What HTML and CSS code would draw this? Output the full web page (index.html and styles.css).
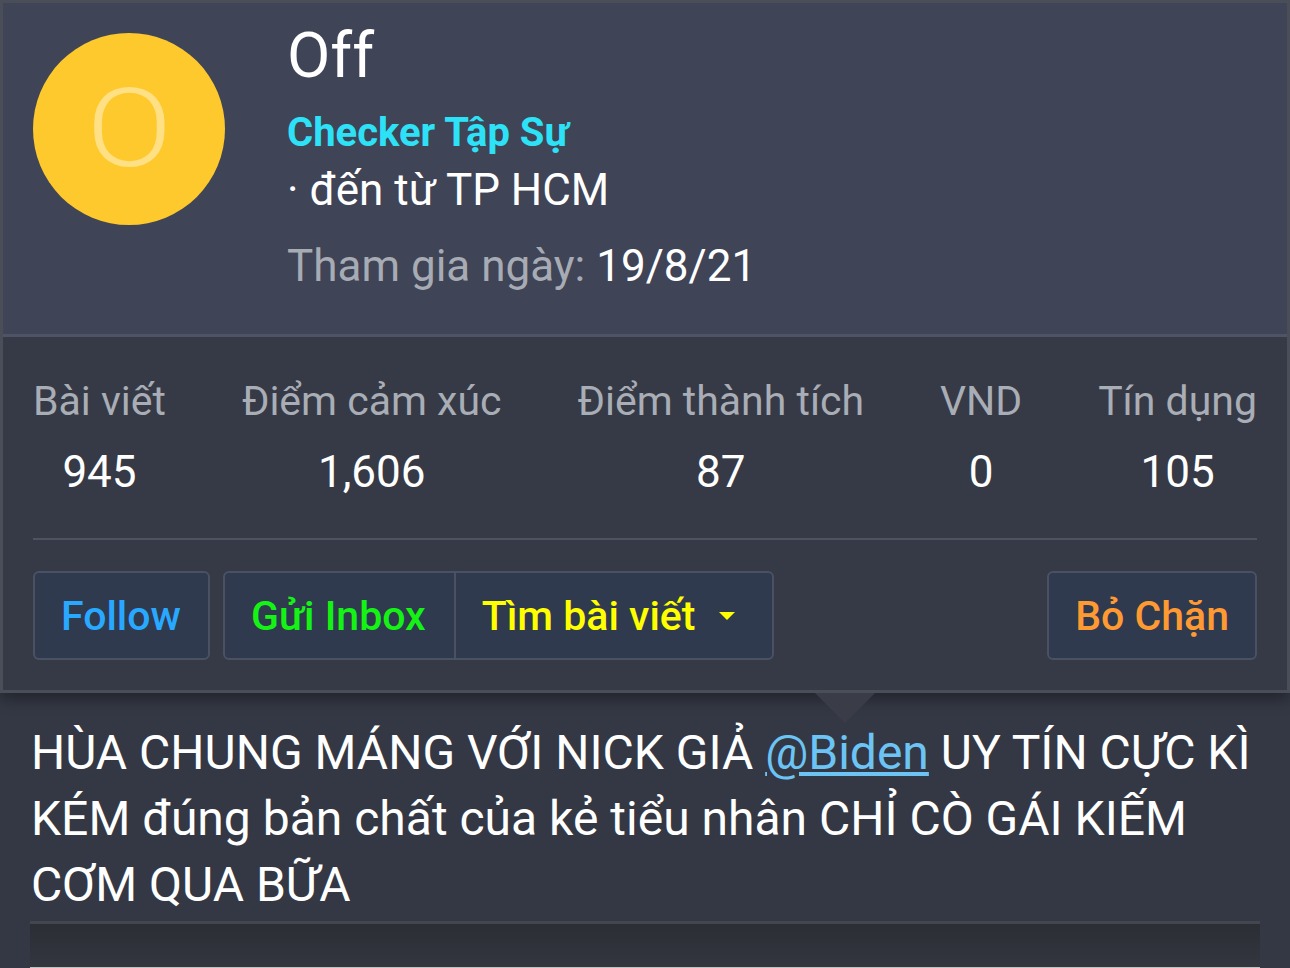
FILE: index.html
```html
<!DOCTYPE html>
<html lang="vi">
<head>
    <meta charset="UTF-8">
    <meta name="viewport" content="width=device-width, initial-scale=1.0">
    <title>Off - hồ sơ</title>
    <link rel="stylesheet" href="styles.css">
</head>
<body>
    <div class="member-card">
        <div class="card-head">
            <div class="avatar"><span>O</span></div>
            <div class="member-info">
                <h2 class="username">Off</h2>
                <div class="user-title">Checker Tập Sự</div>
                <div class="user-from">· đến từ TP HCM</div>
                <div class="user-joined"><span class="muted">Tham gia ngày:</span> 19/8/21</div>
            </div>
        </div>

        <div class="card-body">
            <div class="stats">
                <div class="stat"><div class="stat-label">Bài viết</div><div class="stat-value">945</div></div>
                <div class="stat"><div class="stat-label">Điểm cảm xúc</div><div class="stat-value">1,606</div></div>
                <div class="stat"><div class="stat-label">Điểm thành tích</div><div class="stat-value">87</div></div>
                <div class="stat"><div class="stat-label">VND</div><div class="stat-value">0</div></div>
                <div class="stat"><div class="stat-label">Tín dụng</div><div class="stat-value">105</div></div>
            </div>

            <div class="actions">
                <a class="button btn-follow" href="#">Follow</a>
                <div class="button-group">
                    <a class="button btn-inbox" href="#">Gửi Inbox</a>
                    <a class="button btn-find" href="#">Tìm bài viết <span class="caret"></span></a>
                </div>
                <a class="button btn-unblock" href="#">Bỏ Chặn</a>
            </div>
        </div>
        <span class="card-arrow"></span>
    </div>

    <div class="post-text">
        HÙA CHUNG MÁNG VỚI NICK GIẢ <a class="mention" href="#">@Biden</a> UY TÍN CỰC KÌ KÉM đúng bản chất của kẻ tiểu nhân CHỈ CÒ GÁI KIẾM CƠM QUA BỮA
    </div>

    <div class="post-footer"></div>
</body>
</html>
```

FILE: styles.css
```css
body {
    margin: 0;
    background-color: #343844;
    font-family: Roboto, "Noto Sans", sans-serif;
    color: #ffffff;
    overflow: hidden;
}

.member-card {
    position: relative;
    z-index: 2;
    border: 3px solid #4a4e59;
    background-color: #363a46;
    box-shadow: 0 6px 14px rgba(0, 0, 0, 0.35);
}

.card-head {
    display: flex;
    gap: 62px;
    height: 334px;
    padding: 30px 30px 0;
    box-sizing: border-box;
    background-color: #3f4457;
    border-bottom: 3px solid #4e5466;
}

.avatar {
    width: 192px;
    height: 192px;
    border-radius: 50%;
    background-color: #fec92c;
    display: flex;
    align-items: center;
    justify-content: center;
    flex-shrink: 0;
}

.avatar span {
    color: #ffe084;
    font-size: 110px;
    font-weight: 300;
    line-height: 1;
    transform: scaleX(1.15);
}

.member-info {
    display: flex;
    flex-direction: column;
}

.username {
    margin: 0;
    font-size: 63px;
    font-weight: 400;
    line-height: 52px;
    margin-top: -3px;
}

.user-title {
    margin-top: 27px;
    color: #2de2f6;
    font-weight: 700;
    font-size: 40px;
    line-height: 48px;
}

.user-from {
    margin-top: 9px;
    font-size: 44px;
    line-height: 48px;
}

.user-joined {
    margin-top: 27px;
    font-size: 44px;
    line-height: 50px;
}

.muted {
    color: #a7abb3;
}

.card-body {
    padding: 39px 30px 30px;
}

.stats {
    display: flex;
    justify-content: space-between;
    padding-bottom: 41px;
    border-bottom: 2px solid #4e5363;
}

.stat {
    text-align: center;
}

.stat-label {
    color: #a9adb5;
    font-size: 41px;
    line-height: 50px;
}

.stat-value {
    margin-top: 21px;
    font-size: 44px;
    line-height: 50px;
}

.actions {
    display: flex;
    align-items: stretch;
    margin-top: 31px;
}

.button {
    display: flex;
    align-items: center;
    height: 89px;
    box-sizing: border-box;
    padding: 0 26px;
    border: 2px solid #4a5163;
    border-radius: 6px;
    background-color: #2f3a4f;
    font-size: 41px;
    font-weight: 500;
    text-decoration: none;
}

.btn-follow {
    color: #29a8ff;
    padding-right: 27px;
}

.button-group {
    display: flex;
    margin-left: 13px;
}

.button-group .button:first-child {
    border-radius: 6px 0 0 6px;
    padding-right: 28px;
}

.button-group .button:last-child {
    border-left: 2px solid #4a5163;
    margin-left: -2px;
    border-radius: 0 6px 6px 0;
}

.btn-inbox {
    color: #15f314;
}

.btn-find {
    color: #ffff00;
    gap: 24px;
    padding-right: 37px;
}

.caret {
    width: 0;
    height: 0;
    border-left: 8px solid transparent;
    border-right: 8px solid transparent;
    border-top: 8px solid #ffff00;
}

.btn-unblock {
    margin-left: auto;
    color: #ff9a33;
}

.card-arrow {
    position: absolute;
    left: 812px;
    bottom: -33px;
    width: 0;
    height: 0;
    border-left: 30px solid transparent;
    border-right: 30px solid transparent;
    border-top: 30px solid #3a3d48;
}

.post-text {
    padding: 27px 30px 0 31px;
    font-size: 48px;
    line-height: 66px;
    height: 201px;
}

.mention {
    color: #6cc4f5;
}

.post-footer {
    margin: 0 30px;
    height: 43px;
    border-top: 3px solid #43464f;
    border-bottom: 2px solid #c0c0c0;
    background: linear-gradient(#2c2e36, #34363f);
}
```
